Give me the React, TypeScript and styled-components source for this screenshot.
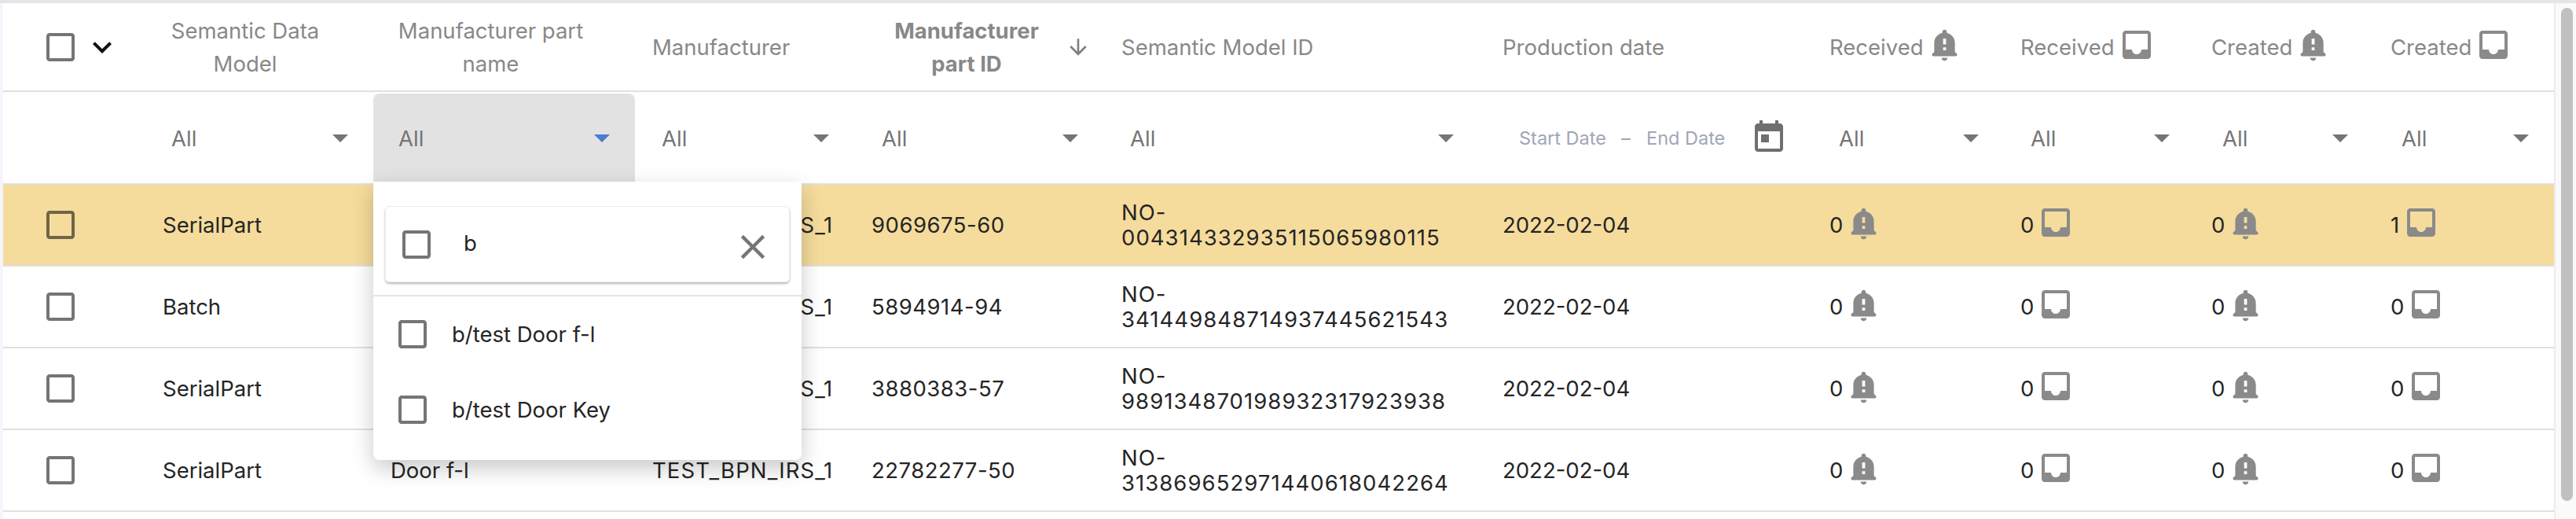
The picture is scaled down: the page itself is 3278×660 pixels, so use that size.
import styled, { createGlobalStyle } from "styled-components";

const font = `"Inter", "Liberation Sans", sans-serif`;
const columns = "183px 288px 333px 279px 318px 485px 417px 243px 243px 228px 229px";

const GlobalStyle = createGlobalStyle`
  html, body {
    margin: 0;
    background: #fff;
  }
  body {
    font-family: ${font};
  }
`;

const Page = styled.div`
  width: 3278px;
  height: 660px;
  display: flex;
  flex-direction: column;
  overflow: hidden;
  background: #fff;
`;

const TopStrip = styled.div`
  height: 4px;
  flex-shrink: 0;
  background: #e4e4ea;
`;

const Body = styled.div`
  flex: 1;
  display: flex;
`;

const LeftGutter = styled.div`
  width: 4px;
  background: #f5f5fb;
`;

const Table = styled.div`
  position: relative;
  width: 3246px;
  font-size: 27.5px;
  color: #252525;
`;

const Track = styled.div`
  width: 28px;
  padding: 6px 4px 23px 7px;
  box-sizing: border-box;
  border-left: 2px solid #ececec;
  background: #fafafa;
`;

const Thumb = styled.div`
  height: 100%;
  border-radius: 8px;
  background: #c0c0c0;
`;

const Row = styled.div<{ $height: number; $highlight?: boolean }>`
  display: grid;
  grid-template-columns: ${columns};
  height: ${(p) => p.$height}px;
  box-sizing: border-box;
  border-bottom: 2px solid #e0e0e0;
  background: ${(p) => (p.$highlight ? "#f5dc9c" : "#fff")};
`;

const HeadCell = styled.div<{ $pad: number }>`
  display: flex;
  align-items: center;
  padding-left: ${(p) => p.$pad}px;
  color: #888;
  line-height: 42px;
`;

const HeadLabel = styled.div<{ $width?: number; $bold?: boolean }>`
  width: ${(p) => (p.$width ? `${p.$width}px` : "auto")};
  text-align: ${(p) => (p.$width ? "center" : "left")};
  font-weight: ${(p) => (p.$bold ? 700 : 400)};
  white-space: ${(p) => (p.$width ? "normal" : "nowrap")};
`;

const SelectCell = styled.div<{ $pad: number; $arrowAt: number; $open?: boolean }>`
  display: flex;
  align-items: center;
  justify-content: space-between;
  margin-top: 2px;
  padding-left: ${(p) => p.$pad}px;
  padding-right: ${(p) => p.$arrowAt}px;
  color: #757575;
  border-radius: 8px 8px 0 0;
  background: ${(p) => (p.$open ? "#e2e2e2" : "transparent")};
`;

const Caret = styled.span<{ $open?: boolean }>`
  width: 0;
  height: 0;
  border-left: 10px solid transparent;
  border-right: 10px solid transparent;
  border-top: 10px solid ${(p) => (p.$open ? "#4a7bd0" : "#757575")};
`;

const DateCell = styled.div`
  display: flex;
  align-items: center;
  padding-left: 43px;
  font-size: 23.5px;
  color: #a0a6b5;
`;

const DatePart = styled.span<{ $width: number }>`
  width: ${(p) => p.$width}px;
  white-space: nowrap;
`;

const DateIcon = styled.svg`
  width: 48px;
  height: 48px;
  margin-left: 6px;
  fill: #6f6f6f;
`;

const Cell = styled.div<{ $pad: number; $spacing?: number }>`
  display: flex;
  align-items: center;
  padding-left: ${(p) => p.$pad}px;
  padding-right: 40px;
  line-height: 32px;
  letter-spacing: ${(p) => p.$spacing ?? 0}px;
`;

const IdText = styled.span`
  letter-spacing: 1.05px;
`;

const CountIcon = styled.svg<{ $size: number }>`
  width: ${(p) => p.$size}px;
  height: ${(p) => p.$size}px;
  margin: 0 0 6px 4px;
  flex-shrink: 0;
  fill: #8a8a8a;
`;

const BoxSvg = styled.svg<{ $left: number }>`
  width: 48px;
  height: 48px;
  margin-left: ${(p) => p.$left}px;
  flex-shrink: 0;
  fill: rgba(0, 0, 0, 0.54);
`;

const Chevron = styled.svg`
  width: 48px;
  height: 48px;
  flex-shrink: 0;
  margin-left: 5px;
  fill: #111;
`;

const SelectAllCell = styled.div`
  display: flex;
  align-items: center;
`;

const SortIcon = styled.svg`
  width: 32px;
  height: 32px;
  margin-left: 26px;
  fill: #808080;
`;

const Menu = styled.div`
  position: absolute;
  left: 471px;
  top: 227px;
  width: 545px;
  height: 354px;
  box-sizing: border-box;
  padding-top: 31px;
  border-radius: 0 0 8px 8px;
  background: #fff;
  box-shadow: 0 10px 28px rgba(0, 0, 0, 0.22);
  z-index: 2;
`;

const SearchBox = styled.div`
  display: flex;
  align-items: center;
  height: 97px;
  margin: 0 15px;
  box-sizing: border-box;
  padding-right: 20px;
  border-radius: 6px;
  border: 1px solid #ececec;
  box-shadow: 0 2px 3px rgba(0, 0, 0, 0.28);
  color: #252525;
`;

const SearchText = styled.span`
  flex: 1;
  margin-left: 36px;
  margin-bottom: 4px;
`;

const ClearIcon = styled.svg`
  width: 52px;
  height: 52px;
  margin-top: 6px;
  fill: #757575;
`;

const MenuDivider = styled.div`
  height: 2px;
  margin-top: 16px;
  background: #e4e4e4;
`;

const MenuList = styled.div`
  display: flex;
  flex-direction: column;
  gap: 48px;
  padding-top: 24px;
`;

const MenuItem = styled.div`
  display: flex;
  align-items: center;
  height: 48px;
  color: #252525;
`;

const MenuLabel = styled.span`
  margin-left: 26px;
`;

const BOX = "M19 5v14H5V5h14m0-2H5c-1.1 0-2 .9-2 2v14c0 1.1.9 2 2 2h14c1.1 0 2-.9 2-2V5c0-1.1-.9-2-2-2z";
const BELL =
  "M12 23c1.1 0 2-.9 2-2h-4c0 1.1.9 2 2 2zm8.29-4.71L19 17v-6c0-3.35-2.36-6.15-5.5-6.83V3.5c0-.83-.67-1.5-1.5-1.5s-1.5.67-1.5 1.5v.67C7.36 4.85 5 7.65 5 11v6l-1.29 1.29c-.63.63-.19 1.71.7 1.71h15.17c.9 0 1.34-1.08.71-1.71zM13 16h-2v-2h2v2zm0-4h-2V8h2v4z";
const INBOX =
  "M19 3H4.99c-1.11 0-1.98.89-1.98 2L3 19c0 1.1.88 2 1.99 2H19c1.1 0 2-.9 2-2V5c0-1.11-.9-2-2-2zm0 12h-4c0 1.66-1.35 3-3 3s-3-1.34-3-3H4.99V5H19v10z";

function Checkbox({ left }: { left: number }) {
  return (
    <BoxSvg $left={left} viewBox="0 0 24 24">
      <path d={BOX} />
    </BoxSvg>
  );
}

function Bell() {
  return (
    <CountIcon $size={45} viewBox="0 0 24 24">
      <path d={BELL} />
    </CountIcon>
  );
}

function Inbox() {
  return (
    <CountIcon $size={48} viewBox="0 0 24 24">
      <path d={INBOX} />
    </CountIcon>
  );
}

// the open filter menu covers the part name of the first three rows
const rows = [
  { type: "SerialPart", name: "", mfr: "TEST_BPN_IRS_1", part: "9069675-60", id: "NO-004314332935115065980115", last: 1, highlight: true },
  { type: "Batch", name: "", mfr: "TEST_BPN_IRS_1", part: "5894914-94", id: "NO-341449848714937445621543", last: 0 },
  { type: "SerialPart", name: "", mfr: "TEST_BPN_IRS_1", part: "3880383-57", id: "NO-989134870198932317923938", last: 0 },
  { type: "SerialPart", name: "Door f-l", mfr: "TEST_BPN_IRS_1", part: "22782277-50", id: "NO-313869652971440618042264", last: 0 },
];

const selects = [
  { pad: 31, arrow: 32 },
  { pad: 32, arrow: 32, open: true },
  { pad: 34, arrow: 32 },
  { pad: 35, arrow: 33 },
  { pad: 33, arrow: 40 },
];

const countSelects = [
  { pad: 33, arrow: 32 },
  { pad: 34, arrow: 32 },
  { pad: 35, arrow: 33 },
  { pad: 35, arrow: 32 },
];

export default function App() {
  return (
    <Page>
      <GlobalStyle />
      <TopStrip />
      <Body>
        <LeftGutter />
        <Table>
          <Row $height={113}>
            <SelectAllCell>
              <Checkbox left={49} />
              <Chevron viewBox="0 0 24 24">
                <path d="M16.59 8.59 12 13.17 7.41 8.59 6 10l6 6 6-6z" />
              </Chevron>
            </SelectAllCell>
            <HeadCell $pad={25}>
              <HeadLabel $width={200}>Semantic Data Model</HeadLabel>
            </HeadCell>
            <HeadCell $pad={22}>
              <HeadLabel $width={255}>Manufacturer part name</HeadLabel>
            </HeadCell>
            <HeadCell $pad={22}>
              <HeadLabel>Manufacturer</HeadLabel>
            </HeadCell>
            <HeadCell $pad={43}>
              <HeadLabel $width={200} $bold>Manufacturer part ID</HeadLabel>
              <SortIcon viewBox="0 0 24 24">
                <path d="M20 12l-1.41-1.41L13 16.17V4h-2v12.17l-5.58-5.59L4 12l8 8 8-8z" />
              </SortIcon>
            </HeadCell>
            <HeadCell $pad={22}>
              <HeadLabel>Semantic Model ID</HeadLabel>
            </HeadCell>
            <HeadCell $pad={22}>
              <HeadLabel>Production date</HeadLabel>
            </HeadCell>
            <HeadCell $pad={21}>
              <HeadLabel>Received</HeadLabel>
              <Bell />
            </HeadCell>
            <HeadCell $pad={21}>
              <HeadLabel>Received</HeadLabel>
              <Inbox />
            </HeadCell>
            <HeadCell $pad={21}>
              <HeadLabel>Created</HeadLabel>
              <Bell />
            </HeadCell>
            <HeadCell $pad={21}>
              <HeadLabel>Created</HeadLabel>
              <Inbox />
            </HeadCell>
          </Row>

          <Row $height={118}>
            <div />
            {selects.map((s, i) => (
              <SelectCell key={i} $pad={s.pad} $arrowAt={s.arrow} $open={s.open}>
                All
                <Caret $open={s.open} />
              </SelectCell>
            ))}
            <DateCell>
              <DatePart $width={130}>Start Date</DatePart>
              <DatePart $width={32}>–</DatePart>
              <DatePart $width={126}>End Date</DatePart>
              <DateIcon viewBox="0 0 24 24">
                <path d="M19 3h-1V1h-2v2H8V1H6v2H5c-1.11 0-1.99.9-1.99 2L3 19c0 1.1.89 2 2 2h14c1.1 0 2-.9 2-2V5c0-1.1-.9-2-2-2zm0 16H5V8h14v11zM7 10h5v5H7z" />
              </DateIcon>
            </DateCell>
            {countSelects.map((s, i) => (
              <SelectCell key={i} $pad={s.pad} $arrowAt={s.arrow}>
                All
                <Caret />
              </SelectCell>
            ))}
          </Row>

          {rows.map((r, i) => (
            <Row key={i} $height={104} $highlight={r.highlight}>
              <SelectAllCell>
                <Checkbox left={49} />
              </SelectAllCell>
              <Cell $pad={20}>{r.type}</Cell>
              <Cell $pad={22}>{r.name}</Cell>
              <Cell $pad={22} $spacing={1.1}>{r.mfr}</Cell>
              <Cell $pad={22} $spacing={0.5}>{r.part}</Cell>
              <Cell $pad={22}>
                <IdText>{r.id}</IdText>
              </Cell>
              <Cell $pad={22}>2022-02-04</Cell>
              <Cell $pad={21}>0<Bell /></Cell>
              <Cell $pad={21}>0<Inbox /></Cell>
              <Cell $pad={21}>0<Bell /></Cell>
              <Cell $pad={21}>{r.last}<Inbox /></Cell>
            </Row>
          ))}

          <Menu>
            <SearchBox>
              <Checkbox left={15} />
              <SearchText>b</SearchText>
              <ClearIcon viewBox="0 0 24 24">
                <path d="M19 6.41 17.59 5 12 10.59 6.41 5 5 6.41 10.59 12 5 17.59 6.41 19 12 13.41 17.59 19 19 17.59 13.41 12z" />
              </ClearIcon>
            </SearchBox>
            <MenuDivider />
            <MenuList>
              <MenuItem>
                <Checkbox left={26} />
                <MenuLabel>b/test Door f-l</MenuLabel>
              </MenuItem>
              <MenuItem>
                <Checkbox left={26} />
                <MenuLabel>b/test Door Key</MenuLabel>
              </MenuItem>
            </MenuList>
          </Menu>
        </Table>
        <Track>
          <Thumb />
        </Track>
      </Body>
    </Page>
  );
}
